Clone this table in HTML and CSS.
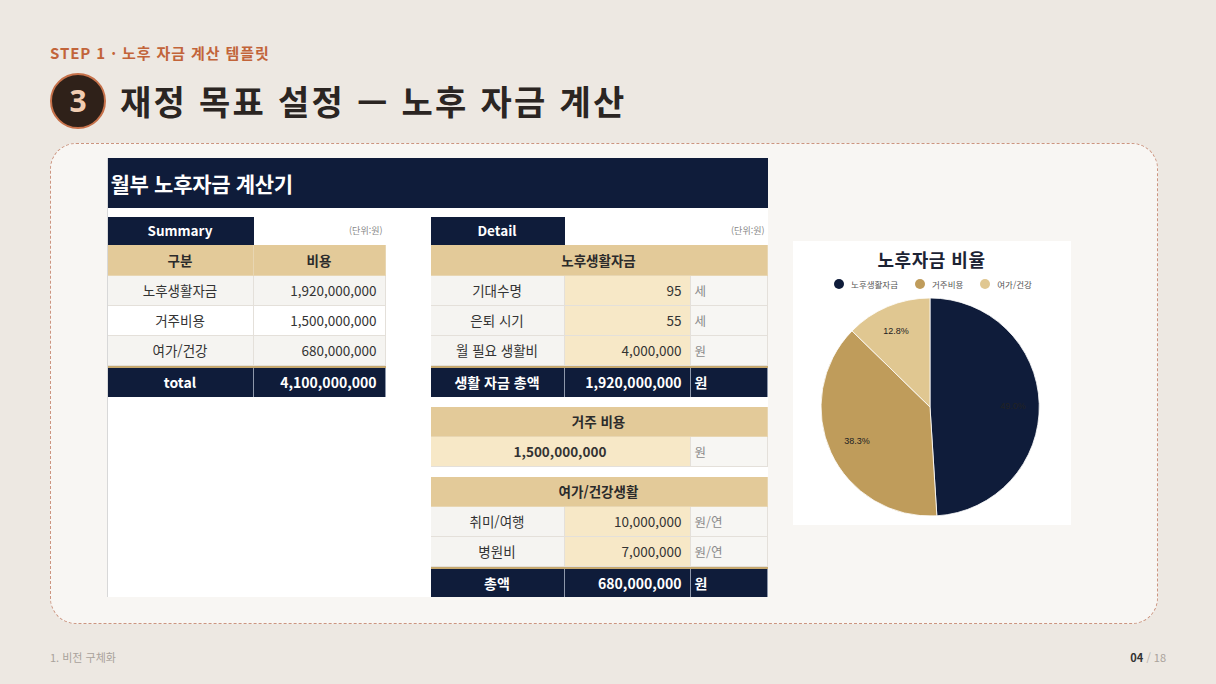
FILE: index.html
```html
<!DOCTYPE html>
<html lang="ko">
<head>
<meta charset="utf-8">
<title>재정 목표 설정 — 노후 자금 계산</title>
<link rel="stylesheet" href="styles.css">
</head>
<body>
<div class="page">
  <div class="step">STEP 1 · 노후 자금 계산 템플릿</div>
  <div class="title-row">
    <div class="badge">3</div>
    <h1 class="title">재정 목표 설정 — 노후 자금 계산</h1>
  </div>

  <div class="card">
    <div class="sheet">
      <div class="sheet-head">월부 노후자금 계산기</div>
      <div class="sheet-body">
        <div class="summary">
          <div class="srow h28">
            <div class="cell navy c1 bold">Summary</div>
            <div class="cell unitnote c2">(단위:원)</div>
          </div>
          <div class="srow h31 tan">
            <div class="cell c1 bold">구분</div>
            <div class="cell c2 bold">비용</div>
          </div>
          <div class="srow h30 grey">
            <div class="cell c1">노후생활자금</div>
            <div class="cell c2 num">1,920,000,000</div>
          </div>
          <div class="srow h30 white">
            <div class="cell c1">거주비용</div>
            <div class="cell c2 num">1,500,000,000</div>
          </div>
          <div class="srow h30 grey">
            <div class="cell c1">여가/건강</div>
            <div class="cell c2 num">680,000,000</div>
          </div>
          <div class="srow h31 total">
            <div class="cell c1 bold">total</div>
            <div class="cell c2 num bold">4,100,000,000</div>
          </div>
        </div>

        <div class="detail">
          <div class="block">
            <div class="drow h28">
              <div class="cell navy d1 bold">Detail</div>
              <div class="cell unitnote d23">(단위:원)</div>
            </div>
            <div class="drow h31 tan">
              <div class="cell span bold">노후생활자금</div>
            </div>
            <div class="drow h30">
              <div class="cell d1 grey">기대수명</div>
              <div class="cell d2 cream num">95</div>
              <div class="cell d3 unit">세</div>
            </div>
            <div class="drow h30">
              <div class="cell d1 grey">은퇴 시기</div>
              <div class="cell d2 cream num">55</div>
              <div class="cell d3 unit">세</div>
            </div>
            <div class="drow h30">
              <div class="cell d1 grey">월 필요 생활비</div>
              <div class="cell d2 cream num">4,000,000</div>
              <div class="cell d3 unit">원</div>
            </div>
            <div class="drow h31 total">
              <div class="cell d1 bold">생활 자금 총액</div>
              <div class="cell d2 num bold">1,920,000,000</div>
              <div class="cell d3 bold unit-w">원</div>
            </div>
          </div>

          <div class="block">
            <div class="drow h30 tan">
              <div class="cell span bold">거주 비용</div>
            </div>
            <div class="drow h30">
              <div class="cell d12 cream bold">1,500,000,000</div>
              <div class="cell d3 unit">원</div>
            </div>
          </div>

          <div class="block">
            <div class="drow h30 tan">
              <div class="cell span bold">여가/건강생활</div>
            </div>
            <div class="drow h30">
              <div class="cell d1 grey">취미/여행</div>
              <div class="cell d2 cream num">10,000,000</div>
              <div class="cell d3 unit">원/연</div>
            </div>
            <div class="drow h30">
              <div class="cell d1 grey">병원비</div>
              <div class="cell d2 cream num">7,000,000</div>
              <div class="cell d3 unit">원/연</div>
            </div>
            <div class="drow h30 total">
              <div class="cell d1 bold">총액</div>
              <div class="cell d2 num bold">680,000,000</div>
              <div class="cell d3 bold unit-w">원</div>
            </div>
          </div>
        </div>
      </div>
    </div>

    <div class="chart">
      <div class="chart-title">노후자금 비율</div>
      <div class="legend">
        <span class="li"><i class="dot navy-dot"></i>노후생활자금</span>
        <span class="li"><i class="dot tan-dot"></i>거주비용</span>
        <span class="li"><i class="dot light-dot"></i>여가/건강</span>
      </div>
      <svg class="pie" width="278" height="232" viewBox="0 52 278 232">
        <path d="M137,167 L137,58 A109,109 0 0 1 143.85,275.8 Z" fill="#0f1c3a" stroke="#ffffff" stroke-width="0.8"/>
        <path d="M137,167 L143.85,275.8 A109,109 0 0 1 59,90.9 Z" fill="#bf9c5b" stroke="#ffffff" stroke-width="0.8"/>
        <path d="M137,167 L59,90.9 A109,109 0 0 1 137,58 Z" fill="#e0c791" stroke="#ffffff" stroke-width="0.8"/>
        <text x="220" y="169" class="plabel">49.0%</text>
        <text x="64" y="204" class="plabel">38.3%</text>
        <text x="103" y="94" class="plabel">12.8%</text>
      </svg>
    </div>
  </div>

  <div class="footer">
    <span class="section">1. 비전 구체화</span>
    <span class="pager"><b>04</b><span class="slash"> / </span>18</span>
  </div>
</div>
</body>
</html>
```

FILE: styles.css
```css
* { box-sizing: border-box; }
html, body { margin: 0; padding: 0; }
body {
  width: 1216px;
  height: 684px;
  overflow: hidden;
  background: #ede8e2;
  font-family: "Noto Sans CJK KR", "Noto Sans", sans-serif;
  color: #2b2522;
}
.page {
  padding: 43px 58px 0 50px;
}
.step {
  font-size: 15px;
  line-height: 20px;
  font-weight: 700;
  color: #c2643a;
  letter-spacing: 0.9px;
}
.title-row {
  margin-top: 10px;
  display: flex;
  align-items: center;
  gap: 14px;
  height: 56px;
}
.badge {
  width: 56px;
  height: 56px;
  border-radius: 50%;
  background: #2f2119;
  border: 2px solid #c6714a;
  color: #f1cdb2;
  font-size: 30px;
  font-weight: 700;
  display: flex;
  align-items: center;
  justify-content: center;
  line-height: 1;
  font-family: "Open Sans", "Noto Sans", sans-serif;
}
.title {
  margin: 0;
  font-size: 34px;
  font-weight: 700;
  letter-spacing: 2.3px;
  color: #2b2522;
  line-height: 44px;
}
.card {
  margin-top: 14px;
  width: 1108px;
  height: 481px;
  border: 1.5px dashed #cc9580;
  border-radius: 26px;
  background: #f8f6f3;
  padding: 13.5px 0 0 55.5px;
  display: flex;
  align-items: flex-start;
  gap: 25px;
}
.sheet {
  width: 661px;
  height: 439px;
  background: #ffffff;
  border-left: 1px solid #d8d8d8;
}
.sheet-head {
  height: 50px;
  background: #0f1c3a;
  color: #ffffff;
  font-size: 21px;
  font-weight: 700;
  line-height: 50px;
  padding-left: 3px;
  letter-spacing: -0.3px;
}
.sheet-body {
  display: flex;
  gap: 45px;
  padding-top: 9px;
}
.summary { width: 278px; }
.detail {
  width: 337px;
  display: flex;
  flex-direction: column;
  gap: 10px;
}
.srow, .drow { display: flex; }
.h28 { height: 28px; }
.h30 { height: 30px; }
.h31 { height: 31px; }
.cell {
  display: flex;
  align-items: center;
  justify-content: center;
  font-size: 13.5px;
  color: #333333;
  border-bottom: 1px solid #e4e0da;
  border-right: 1px solid #e4e0da;
  white-space: nowrap;
}
.c1 { width: 146px; }
.c2 { width: 132px; }
.d1 { width: 134px; }
.d2 { width: 126px; }
.d3 { width: 77px; }
.d12 { width: 260px; }
.d23 { width: 203px; }
.span { width: 337px; }
.bold { font-weight: 700; }
.num { justify-content: flex-end; padding-right: 8px; }
.unit {
  justify-content: flex-start;
  padding-left: 4px;
  color: #8a8a8a;
  font-size: 12.5px;
  background: #f7f6f3;
}
.unit-w { justify-content: flex-start; padding-left: 4px; }
.navy {
  background: #0f1c3a;
  color: #ffffff;
  border-color: #0f1c3a;
}
.unitnote {
  justify-content: flex-end;
  font-size: 9px;
  color: #888888;
  padding-right: 3px;
  border: none;
  background: #ffffff;
}
.tan { background: #e3ca99; }
.tan .cell { border-color: #e8d6b2; color: #2b2b2b; }
.grey { background: #f5f4f1; }
.srow.grey .cell, .srow.white .cell { background: transparent; }
.white { background: #ffffff; }
.cream { background: #f7e8c7; }
.total {
  background: #0f1c3a;
  border-top: 2px solid #c6a86e;
}
.total .cell {
  color: #ffffff;
  border-color: #8d97aa;
  border-bottom: none;
  font-size: 14px;
}
.drow.total .cell, .srow.total .cell { height: 100%; }

.chart {
  margin-top: 83px;
  width: 278px;
  height: 284px;
  background: #ffffff;
  display: flex;
  flex-direction: column;
  align-items: center;
}
.chart-title {
  margin-top: 5px;
  font-size: 18px;
  font-weight: 700;
  color: #1c2334;
  line-height: 26px;
  letter-spacing: 0.5px;
}
.legend {
  margin-top: 6px;
  display: flex;
  gap: 17px;
  height: 12px;
  align-items: center;
  font-size: 8.5px;
  color: #555555;
  padding-left: 3px;
}
.li { display: flex; align-items: center; gap: 7px; }
.dot {
  display: inline-block;
  width: 10px;
  height: 10px;
  border-radius: 50%;
}
.navy-dot { background: #0f1c3a; }
.tan-dot { background: #bf9c5b; }
.light-dot { background: #e0c791; }
.pie { display: block; margin-top: 2px; }
.plabel {
  font-family: "Liberation Sans", Arial, sans-serif;
  font-size: 9px;
  fill: #222222;
  text-anchor: middle;
}
.footer {
  margin-top: 26px;
  display: flex;
  justify-content: space-between;
  align-items: center;
  width: 1116px;
  font-size: 11px;
  line-height: 14px;
  color: #a9a29b;
}
.pager b { color: #333333; font-weight: 700; }
.slash { color: #b8b2ab; }
```
